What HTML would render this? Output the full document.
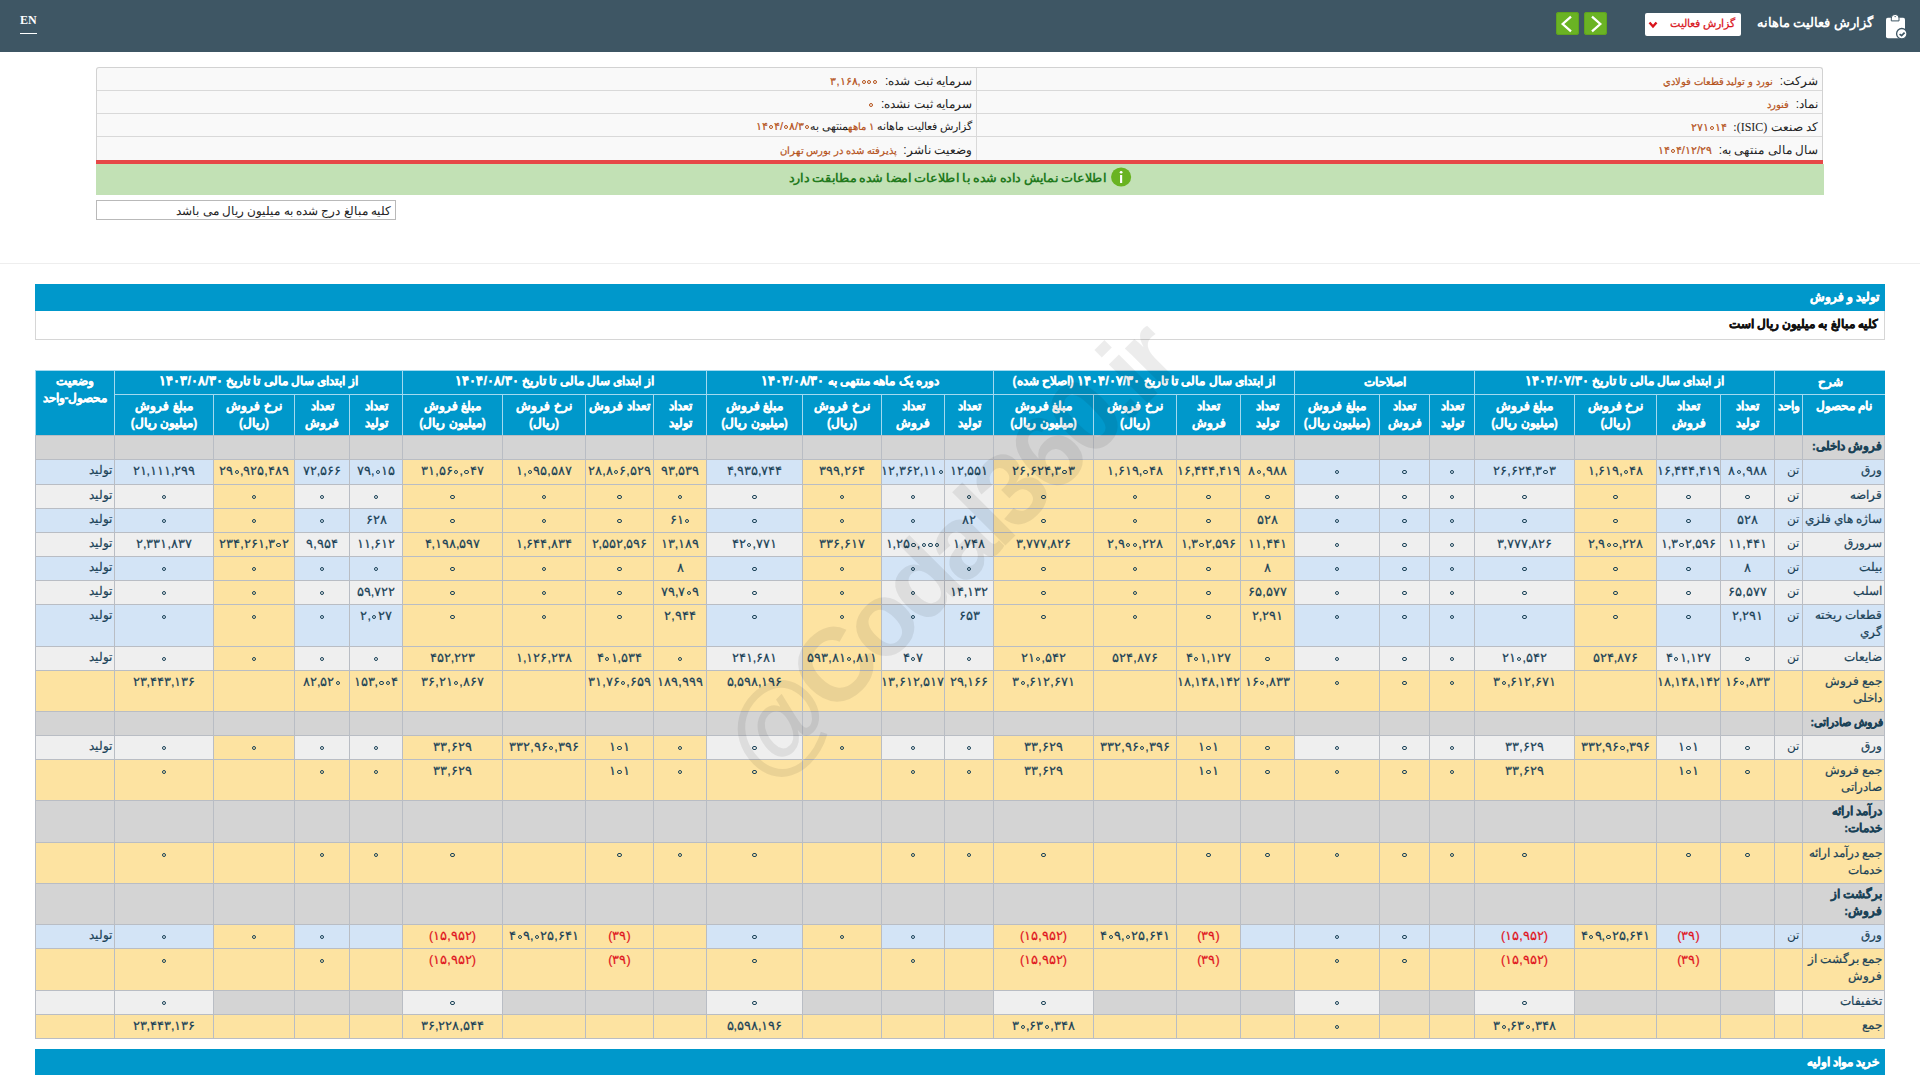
<!DOCTYPE html>
<html lang="fa" dir="rtl">
<head>
<meta charset="utf-8">
<title>Codal</title>
<style>
html,body{margin:0;padding:0;}
body{width:1920px;height:1080px;overflow:hidden;position:relative;background:#fff;font-family:"Liberation Sans",sans-serif;color:#222;}
.abs{position:absolute;}
#top{position:absolute;left:0;top:0;width:1920px;height:52px;background:#3e5664;}
#en{position:absolute;left:20px;top:13px;font-family:"Liberation Serif",serif;font-size:12px;font-weight:bold;color:#fff;border-bottom:1.3px solid #fff;line-height:15px;padding-bottom:5px;}
#ttl{position:absolute;right:47px;top:15px;color:#fff;font-size:13px;font-weight:bold;white-space:nowrap;}
#sel{position:absolute;left:1645px;top:13px;width:96px;height:23px;background:#fff;border-radius:2px;}
#sel span{position:absolute;right:6px;top:4px;color:#d9141b;font-size:11px;-webkit-text-stroke:0.25px #d9141b;white-space:nowrap;}
.gbtn{position:absolute;top:12px;width:23px;height:23px;background:#6ab324;border-radius:3px;box-shadow:inset 0 0 0 1px #5fa31f;}
#info{position:absolute;left:96px;top:67px;width:1727px;height:93px;box-sizing:border-box;border:1px solid #d2d2d2;border-bottom:none;border-radius:3px 3px 0 0;background:#f9f9f9;}
.irow{position:absolute;left:0;width:1725px;height:23px;border-top:1px solid #d9d9d9;}
.lab{position:absolute;font-size:12px;color:#222;white-space:nowrap;top:4px;}
.val{color:#b5521a;font-size:10px;-webkit-text-stroke:0.2px currentColor;}
.val.vn{font-size:11px;}
.vb{font-weight:normal;unicode-bidi:isolate;direction:ltr;}
i.z{display:inline-block;width:.537em;height:0;position:relative;}
i.z::after{content:"";position:absolute;left:50%;margin-left:-2px;bottom:1px;width:4px;height:4px;box-sizing:border-box;border:1.4px solid currentColor;border-radius:50%;}
#red{position:absolute;left:96px;top:160px;width:1727px;height:4px;background:#e64747;}
#green{position:absolute;left:96px;top:164px;width:1728px;height:31px;background:#c2e1b5;}
#note{position:absolute;left:96px;top:200px;width:300px;height:20px;box-sizing:border-box;border:1px solid #b9b9b9;font-size:12px;}
#hr{position:absolute;left:0;top:263px;width:1920px;height:1px;background:#eee;}
.bar{position:absolute;left:35px;width:1850px;height:27px;background:#0098cb;color:#fff;font-weight:bold;font-size:11.5px;-webkit-text-stroke:0.5px #fff;}
.bar span{position:absolute;right:6px;top:6px;white-space:nowrap;}
#sub{position:absolute;left:35px;top:311px;width:1850px;height:29px;box-sizing:border-box;border:1px solid #d6d6d6;border-top:none;font-weight:bold;font-size:12px;color:#111;}
#sub span{position:absolute;right:6px;top:6px;white-space:nowrap;font-size:11.8px;-webkit-text-stroke:0.45px #111;}
.h{position:absolute;box-sizing:border-box;background:#0098cb;color:#fff;font-weight:bold;font-size:12px;-webkit-text-stroke:0.3px #fff;line-height:17px;text-align:center;border-left:1px solid #a3d9ef;border-top:1px solid #a3d9ef;padding-top:3px;white-space:nowrap;overflow:hidden;}
.h .hd{font-size:13px;}
.c{position:absolute;box-sizing:border-box;border-left:1px solid #b9bdc4;border-top:1px solid #b9bdc4;font-size:11px;line-height:17.6px;text-align:center;color:#1a4257;padding-top:2px;white-space:nowrap;overflow:hidden;}
.c.nm{text-align:right;padding-right:2px;font-size:11.5px;line-height:17px;border-right:1px solid #b9bdc4;-webkit-text-stroke:0.2px currentColor;}
.c.st{text-align:right;padding-right:2px;font-size:11.5px;-webkit-text-stroke:0.2px currentColor;}
.c.b{font-weight:bold;font-size:11.5px;-webkit-text-stroke:0.35px currentColor;}
.c.u{text-align:right;padding-right:3px;font-size:12px;}
.c.n{font-size:12.5px;padding-top:3px;-webkit-text-stroke:0.2px currentColor;}
.c b{font-weight:normal;unicode-bidi:isolate;direction:ltr;}
.c i{display:inline-block;width:.537em;height:0;position:relative;}
.c i::after{content:"";position:absolute;left:50%;margin-left:-2px;bottom:0.8px;width:4.2px;height:4.2px;box-sizing:border-box;border:1.6px solid currentColor;border-radius:50%;}
.c.red{color:#e0141e;}
#wm{position:absolute;left:949px;top:551px;font-size:104px;letter-spacing:-6px;line-height:1;font-weight:bold;color:rgba(0,0,0,0.075);transform:translate(-50%,-50%) rotate(-45deg);white-space:nowrap;font-family:"Liberation Sans",sans-serif;direction:ltr;}
</style>
</head>
<body>
<div id="top">
  <div id="en">EN</div>
  <svg class="abs" style="left:1884px;top:14px" width="26" height="27" viewBox="0 0 26 27">
    <rect x="2" y="3.8" width="19" height="20.5" rx="1.8" fill="#fff"/>
    <path d="M7.3 6.9 V4 A3.85 3.6 0 0 1 15 4 V6.9 Z" fill="#fff" stroke="#3e5664" stroke-width="1"/>
    <circle cx="11.15" cy="2.6" r="0.7" fill="#3e5664"/>
    <circle cx="17.8" cy="19.7" r="5.2" fill="#fff" stroke="#3e5664" stroke-width="1.3"/>
    <path d="M15.6 20.1 L17.6 21.6 L20.6 18.6" stroke="#3e5664" stroke-width="1.7" fill="none"/>
  </svg>
  <div id="ttl">گزارش فعالیت ماهانه</div>
  <div id="sel"><span>گزارش فعالیت</span>
    <svg class="abs" style="left:3px;top:8px" width="10" height="8" viewBox="0 0 10 8"><path d="M1.5 1.5 L5 5.5 L8.5 1.5" stroke="#d9141b" stroke-width="2.4" fill="none"/></svg>
  </div>
  <div class="gbtn" style="left:1584px"><svg width="23" height="23" viewBox="0 0 23 23"><path d="M8 4.6 L16.3 12 L8 19.4" stroke="#fff" stroke-width="2.3" fill="none"/></svg></div>
  <div class="gbtn" style="left:1556px"><svg width="23" height="23" viewBox="0 0 23 23"><path d="M15 4.6 L6.7 12 L15 19.4" stroke="#fff" stroke-width="2.3" fill="none"/></svg></div>
</div>

<div id="info">
  <div class="irow" style="top:-1px;border-top:none"></div>
  <div class="irow" style="top:22px"></div>
  <div class="irow" style="top:45px"></div>
  <div class="irow" style="top:68px"></div>
  <div class="abs" style="left:879px;top:0;width:1px;height:92px;background:#d9d9d9"></div>
  <div class="lab" style="right:4px;top:6px">شرکت:&nbsp; <span class="val">نورد و تولید قطعات فولادي</span></div>
  <div class="lab" style="right:4px;top:29px">نماد:&nbsp; <span class="val">فنورد</span></div>
  <div class="lab" style="right:4px;top:52px">کد صنعت <span style="font-family:'Liberation Serif',serif;font-size:12px">(ISIC):</span>&nbsp; <span class="val vn"><b class="vb" dir="ltr">۲۷۱<i class="z"></i>۱۴</b></span></div>
  <div class="lab" style="right:4px;top:75px">سال مالی منتهی به:&nbsp; <span class="val vn"><b class="vb" dir="ltr">۱۴<i class="z"></i>۴/۱۲/۲۹</b></span></div>
  <div class="lab" style="right:850px;top:6px">سرمایه ثبت شده:&nbsp; <span class="val vn"><b class="vb" dir="ltr">۳,۱۶۸,<i class="z"></i><i class="z"></i><i class="z"></i></b></span></div>
  <div class="lab" style="right:850px;top:29px">سرمایه ثبت نشده:&nbsp; <span class="val vn"><b class="vb" dir="ltr"><i class="z"></i></b></span></div>
  <div class="lab" style="right:850px;top:52px;font-size:11px">گزارش فعالیت ماهانه <span class="val">۱ ماهه</span>منتهی به<span class="val vn"><b class="vb" dir="ltr">۱۴<i class="z"></i>۴/<i class="z"></i>۸/۳<i class="z"></i></b></span></div>
  <div class="lab" style="right:850px;top:75px">وضعیت ناشر:&nbsp; <span class="val">پذیرفته شده در بورس تهران</span></div>
</div>
<div id="red"></div>
<div id="green">
  <div class="abs" style="left:0;right:0;top:3px;text-align:center;color:#237a1d;font-weight:bold;font-size:12px;transform:scaleX(1.06);white-space:nowrap">
    <svg style="vertical-align:-5px;margin-left:4px" width="20" height="20" viewBox="0 0 20 20"><circle cx="10" cy="10" r="9.5" fill="#69b321"/><rect x="9" y="8" width="2" height="8" fill="#fff"/><circle cx="10" cy="5.2" r="1.3" fill="#fff"/></svg>اطلاعات نمایش داده شده با اطلاعات امضا شده مطابقت دارد
  </div>
</div>
<div id="note"><span class="abs" style="right:4px;top:3px;white-space:nowrap">کلیه مبالغ درج شده به میلیون ریال می باشد</span></div>
<div id="hr"></div>

<div class="bar" style="top:284px"><span>تولید و فروش</span></div>
<div id="sub"><span>کلیه مبالغ به میلیون ریال است</span></div>

<div class="h" style="left:1774px;top:370px;width:111px;height:24px">شرح</div>
<div class="h" style="left:1474px;top:370px;width:300px;height:24px;padding-top:1px">از ابتدای سال مالی تا تاریخ <span class="hd">۱۴۰۴/۰۷/۳۰</span></div>
<div class="h" style="left:1294px;top:370px;width:180px;height:24px">اصلاحات</div>
<div class="h" style="left:993px;top:370px;width:301px;height:24px;padding-top:1px">از ابتدای سال مالی تا تاریخ <span class="hd">۱۴۰۴/۰۷/۳۰</span> (اصلاح شده)</div>
<div class="h" style="left:706px;top:370px;width:287px;height:24px;padding-top:1px">دوره یک ماهه منتهی به <span class="hd">۱۴۰۴/۰۸/۳۰</span></div>
<div class="h" style="left:402px;top:370px;width:304px;height:24px;padding-top:1px">از ابتدای سال مالی تا تاریخ <span class="hd">۱۴۰۴/۰۸/۳۰</span></div>
<div class="h" style="left:114px;top:370px;width:288px;height:24px;padding-top:1px">از ابتدای سال مالی تا تاریخ <span class="hd">۱۴۰۳/۰۸/۳۰</span></div>
<div class="h" style="left:35px;top:370px;width:79px;height:65px;padding-top:2px">وضعیت<br>محصول-واحد</div>
<div class="h s" style="left:1802px;top:394px;width:83px;height:41px">نام محصول</div>
<div class="h s" style="left:1774px;top:394px;width:28px;height:41px">واحد</div>
<div class="h s" style="left:1720px;top:394px;width:54px;height:41px">تعداد<br>تولید</div>
<div class="h s" style="left:1656px;top:394px;width:64px;height:41px">تعداد<br>فروش</div>
<div class="h s" style="left:1574px;top:394px;width:82px;height:41px">نرخ فروش<br>(ریال)</div>
<div class="h s" style="left:1474px;top:394px;width:100px;height:41px">مبلغ فروش<br>(میلیون ریال)</div>
<div class="h s" style="left:1429px;top:394px;width:45px;height:41px">تعداد<br>تولید</div>
<div class="h s" style="left:1379px;top:394px;width:50px;height:41px">تعداد<br>فروش</div>
<div class="h s" style="left:1294px;top:394px;width:85px;height:41px">مبلغ فروش<br>(میلیون ریال)</div>
<div class="h s" style="left:1240px;top:394px;width:54px;height:41px">تعداد<br>تولید</div>
<div class="h s" style="left:1176px;top:394px;width:64px;height:41px">تعداد<br>فروش</div>
<div class="h s" style="left:1093px;top:394px;width:83px;height:41px">نرخ فروش<br>(ریال)</div>
<div class="h s" style="left:993px;top:394px;width:100px;height:41px">مبلغ فروش<br>(میلیون ریال)</div>
<div class="h s" style="left:944px;top:394px;width:49px;height:41px">تعداد<br>تولید</div>
<div class="h s" style="left:881px;top:394px;width:63px;height:41px">تعداد<br>فروش</div>
<div class="h s" style="left:802px;top:394px;width:79px;height:41px">نرخ فروش<br>(ریال)</div>
<div class="h s" style="left:706px;top:394px;width:96px;height:41px">مبلغ فروش<br>(میلیون ریال)</div>
<div class="h s" style="left:653px;top:394px;width:53px;height:41px">تعداد<br>تولید</div>
<div class="h s" style="left:585px;top:394px;width:68px;height:41px">تعداد فروش</div>
<div class="h s" style="left:502px;top:394px;width:83px;height:41px">نرخ فروش<br>(ریال)</div>
<div class="h s" style="left:402px;top:394px;width:100px;height:41px">مبلغ فروش<br>(میلیون ریال)</div>
<div class="h s" style="left:349px;top:394px;width:53px;height:41px">تعداد<br>تولید</div>
<div class="h s" style="left:294px;top:394px;width:55px;height:41px">تعداد<br>فروش</div>
<div class="h s" style="left:213px;top:394px;width:81px;height:41px">نرخ فروش<br>(ریال)</div>
<div class="h s" style="left:114px;top:394px;width:99px;height:41px">مبلغ فروش<br>(میلیون ریال)</div>
<div class="c nm b" style="left:1802px;top:435px;width:83px;height:24px;background:#d4d4d4">فروش داخلی:</div>
<div class="c u" style="left:1774px;top:435px;width:28px;height:24px;background:#d4d4d4"></div>
<div class="c" style="left:1720px;top:435px;width:54px;height:24px;background:#d4d4d4"></div>
<div class="c" style="left:1656px;top:435px;width:64px;height:24px;background:#d4d4d4"></div>
<div class="c" style="left:1574px;top:435px;width:82px;height:24px;background:#d4d4d4"></div>
<div class="c" style="left:1474px;top:435px;width:100px;height:24px;background:#d4d4d4"></div>
<div class="c" style="left:1429px;top:435px;width:45px;height:24px;background:#d4d4d4"></div>
<div class="c" style="left:1379px;top:435px;width:50px;height:24px;background:#d4d4d4"></div>
<div class="c" style="left:1294px;top:435px;width:85px;height:24px;background:#d4d4d4"></div>
<div class="c" style="left:1240px;top:435px;width:54px;height:24px;background:#d4d4d4"></div>
<div class="c" style="left:1176px;top:435px;width:64px;height:24px;background:#d4d4d4"></div>
<div class="c" style="left:1093px;top:435px;width:83px;height:24px;background:#d4d4d4"></div>
<div class="c" style="left:993px;top:435px;width:100px;height:24px;background:#d4d4d4"></div>
<div class="c" style="left:944px;top:435px;width:49px;height:24px;background:#d4d4d4"></div>
<div class="c" style="left:881px;top:435px;width:63px;height:24px;background:#d4d4d4"></div>
<div class="c" style="left:802px;top:435px;width:79px;height:24px;background:#d4d4d4"></div>
<div class="c" style="left:706px;top:435px;width:96px;height:24px;background:#d4d4d4"></div>
<div class="c" style="left:653px;top:435px;width:53px;height:24px;background:#d4d4d4"></div>
<div class="c" style="left:585px;top:435px;width:68px;height:24px;background:#d4d4d4"></div>
<div class="c" style="left:502px;top:435px;width:83px;height:24px;background:#d4d4d4"></div>
<div class="c" style="left:402px;top:435px;width:100px;height:24px;background:#d4d4d4"></div>
<div class="c" style="left:349px;top:435px;width:53px;height:24px;background:#d4d4d4"></div>
<div class="c" style="left:294px;top:435px;width:55px;height:24px;background:#d4d4d4"></div>
<div class="c" style="left:213px;top:435px;width:81px;height:24px;background:#d4d4d4"></div>
<div class="c" style="left:114px;top:435px;width:99px;height:24px;background:#d4d4d4"></div>
<div class="c st" style="left:35px;top:435px;width:79px;height:24px;background:#d4d4d4"></div>
<div class="c nm" style="left:1802px;top:459px;width:83px;height:25px;background:#d3e4f6">ورق</div>
<div class="c u" style="left:1774px;top:459px;width:28px;height:25px;background:#d3e4f6">تن</div>
<div class="c n" style="left:1720px;top:459px;width:54px;height:25px;background:#d3e4f6"><b dir="ltr">۸<i></i>,۹۸۸</b></div>
<div class="c n" style="left:1656px;top:459px;width:64px;height:25px;background:#d3e4f6"><b dir="ltr">۱۶,۴۴۴,۴۱۹</b></div>
<div class="c n" style="left:1574px;top:459px;width:82px;height:25px;background:#fde3a1"><b dir="ltr">۱,۶۱۹,<i></i>۴۸</b></div>
<div class="c n" style="left:1474px;top:459px;width:100px;height:25px;background:#d3e4f6"><b dir="ltr">۲۶,۶۲۴,۳<i></i>۳</b></div>
<div class="c n" style="left:1429px;top:459px;width:45px;height:25px;background:#d3e4f6"><b dir="ltr"><i></i></b></div>
<div class="c n" style="left:1379px;top:459px;width:50px;height:25px;background:#d3e4f6"><b dir="ltr"><i></i></b></div>
<div class="c n" style="left:1294px;top:459px;width:85px;height:25px;background:#d3e4f6"><b dir="ltr"><i></i></b></div>
<div class="c n" style="left:1240px;top:459px;width:54px;height:25px;background:#fde3a1"><b dir="ltr">۸<i></i>,۹۸۸</b></div>
<div class="c n" style="left:1176px;top:459px;width:64px;height:25px;background:#fde3a1"><b dir="ltr">۱۶,۴۴۴,۴۱۹</b></div>
<div class="c n" style="left:1093px;top:459px;width:83px;height:25px;background:#fde3a1"><b dir="ltr">۱,۶۱۹,<i></i>۴۸</b></div>
<div class="c n" style="left:993px;top:459px;width:100px;height:25px;background:#fde3a1"><b dir="ltr">۲۶,۶۲۴,۳<i></i>۳</b></div>
<div class="c n" style="left:944px;top:459px;width:49px;height:25px;background:#d3e4f6"><b dir="ltr">۱۲,۵۵۱</b></div>
<div class="c n" style="left:881px;top:459px;width:63px;height:25px;background:#d3e4f6"><b dir="ltr">۱۲,۳۶۲,۱۱<i></i></b></div>
<div class="c n" style="left:802px;top:459px;width:79px;height:25px;background:#fde3a1"><b dir="ltr">۳۹۹,۲۶۴</b></div>
<div class="c n" style="left:706px;top:459px;width:96px;height:25px;background:#d3e4f6"><b dir="ltr">۴,۹۳۵,۷۴۴</b></div>
<div class="c n" style="left:653px;top:459px;width:53px;height:25px;background:#fde3a1"><b dir="ltr">۹۳,۵۳۹</b></div>
<div class="c n" style="left:585px;top:459px;width:68px;height:25px;background:#fde3a1"><b dir="ltr">۲۸,۸<i></i>۶,۵۲۹</b></div>
<div class="c n" style="left:502px;top:459px;width:83px;height:25px;background:#fde3a1"><b dir="ltr">۱,<i></i>۹۵,۵۸۷</b></div>
<div class="c n" style="left:402px;top:459px;width:100px;height:25px;background:#fde3a1"><b dir="ltr">۳۱,۵۶<i></i>,<i></i>۴۷</b></div>
<div class="c n" style="left:349px;top:459px;width:53px;height:25px;background:#d3e4f6"><b dir="ltr">۷۹,<i></i>۱۵</b></div>
<div class="c n" style="left:294px;top:459px;width:55px;height:25px;background:#d3e4f6"><b dir="ltr">۷۲,۵۶۶</b></div>
<div class="c n" style="left:213px;top:459px;width:81px;height:25px;background:#fde3a1"><b dir="ltr">۲۹<i></i>,۹۲۵,۴۸۹</b></div>
<div class="c n" style="left:114px;top:459px;width:99px;height:25px;background:#d3e4f6"><b dir="ltr">۲۱,۱۱۱,۲۹۹</b></div>
<div class="c st" style="left:35px;top:459px;width:79px;height:25px;background:#d3e4f6">تولید</div>
<div class="c nm" style="left:1802px;top:484px;width:83px;height:24px;background:#efefef">قراضه</div>
<div class="c u" style="left:1774px;top:484px;width:28px;height:24px;background:#efefef">تن</div>
<div class="c n" style="left:1720px;top:484px;width:54px;height:24px;background:#efefef"><b dir="ltr"><i></i></b></div>
<div class="c n" style="left:1656px;top:484px;width:64px;height:24px;background:#efefef"><b dir="ltr"><i></i></b></div>
<div class="c n" style="left:1574px;top:484px;width:82px;height:24px;background:#fde3a1"><b dir="ltr"><i></i></b></div>
<div class="c n" style="left:1474px;top:484px;width:100px;height:24px;background:#efefef"><b dir="ltr"><i></i></b></div>
<div class="c n" style="left:1429px;top:484px;width:45px;height:24px;background:#efefef"><b dir="ltr"><i></i></b></div>
<div class="c n" style="left:1379px;top:484px;width:50px;height:24px;background:#efefef"><b dir="ltr"><i></i></b></div>
<div class="c n" style="left:1294px;top:484px;width:85px;height:24px;background:#efefef"><b dir="ltr"><i></i></b></div>
<div class="c n" style="left:1240px;top:484px;width:54px;height:24px;background:#fde3a1"><b dir="ltr"><i></i></b></div>
<div class="c n" style="left:1176px;top:484px;width:64px;height:24px;background:#fde3a1"><b dir="ltr"><i></i></b></div>
<div class="c n" style="left:1093px;top:484px;width:83px;height:24px;background:#fde3a1"><b dir="ltr"><i></i></b></div>
<div class="c n" style="left:993px;top:484px;width:100px;height:24px;background:#fde3a1"><b dir="ltr"><i></i></b></div>
<div class="c n" style="left:944px;top:484px;width:49px;height:24px;background:#efefef"><b dir="ltr"><i></i></b></div>
<div class="c n" style="left:881px;top:484px;width:63px;height:24px;background:#efefef"><b dir="ltr"><i></i></b></div>
<div class="c n" style="left:802px;top:484px;width:79px;height:24px;background:#fde3a1"><b dir="ltr"><i></i></b></div>
<div class="c n" style="left:706px;top:484px;width:96px;height:24px;background:#efefef"><b dir="ltr"><i></i></b></div>
<div class="c n" style="left:653px;top:484px;width:53px;height:24px;background:#fde3a1"><b dir="ltr"><i></i></b></div>
<div class="c n" style="left:585px;top:484px;width:68px;height:24px;background:#fde3a1"><b dir="ltr"><i></i></b></div>
<div class="c n" style="left:502px;top:484px;width:83px;height:24px;background:#fde3a1"><b dir="ltr"><i></i></b></div>
<div class="c n" style="left:402px;top:484px;width:100px;height:24px;background:#fde3a1"><b dir="ltr"><i></i></b></div>
<div class="c n" style="left:349px;top:484px;width:53px;height:24px;background:#efefef"><b dir="ltr"><i></i></b></div>
<div class="c n" style="left:294px;top:484px;width:55px;height:24px;background:#efefef"><b dir="ltr"><i></i></b></div>
<div class="c n" style="left:213px;top:484px;width:81px;height:24px;background:#fde3a1"><b dir="ltr"><i></i></b></div>
<div class="c n" style="left:114px;top:484px;width:99px;height:24px;background:#efefef"><b dir="ltr"><i></i></b></div>
<div class="c st" style="left:35px;top:484px;width:79px;height:24px;background:#efefef">تولید</div>
<div class="c nm" style="left:1802px;top:508px;width:83px;height:24px;background:#d3e4f6">ساژه هاي فلزي</div>
<div class="c u" style="left:1774px;top:508px;width:28px;height:24px;background:#d3e4f6">تن</div>
<div class="c n" style="left:1720px;top:508px;width:54px;height:24px;background:#d3e4f6"><b dir="ltr">۵۲۸</b></div>
<div class="c n" style="left:1656px;top:508px;width:64px;height:24px;background:#d3e4f6"><b dir="ltr"><i></i></b></div>
<div class="c n" style="left:1574px;top:508px;width:82px;height:24px;background:#fde3a1"><b dir="ltr"><i></i></b></div>
<div class="c n" style="left:1474px;top:508px;width:100px;height:24px;background:#d3e4f6"><b dir="ltr"><i></i></b></div>
<div class="c n" style="left:1429px;top:508px;width:45px;height:24px;background:#d3e4f6"><b dir="ltr"><i></i></b></div>
<div class="c n" style="left:1379px;top:508px;width:50px;height:24px;background:#d3e4f6"><b dir="ltr"><i></i></b></div>
<div class="c n" style="left:1294px;top:508px;width:85px;height:24px;background:#d3e4f6"><b dir="ltr"><i></i></b></div>
<div class="c n" style="left:1240px;top:508px;width:54px;height:24px;background:#fde3a1"><b dir="ltr">۵۲۸</b></div>
<div class="c n" style="left:1176px;top:508px;width:64px;height:24px;background:#fde3a1"><b dir="ltr"><i></i></b></div>
<div class="c n" style="left:1093px;top:508px;width:83px;height:24px;background:#fde3a1"><b dir="ltr"><i></i></b></div>
<div class="c n" style="left:993px;top:508px;width:100px;height:24px;background:#fde3a1"><b dir="ltr"><i></i></b></div>
<div class="c n" style="left:944px;top:508px;width:49px;height:24px;background:#d3e4f6"><b dir="ltr">۸۲</b></div>
<div class="c n" style="left:881px;top:508px;width:63px;height:24px;background:#d3e4f6"><b dir="ltr"><i></i></b></div>
<div class="c n" style="left:802px;top:508px;width:79px;height:24px;background:#fde3a1"><b dir="ltr"><i></i></b></div>
<div class="c n" style="left:706px;top:508px;width:96px;height:24px;background:#d3e4f6"><b dir="ltr"><i></i></b></div>
<div class="c n" style="left:653px;top:508px;width:53px;height:24px;background:#fde3a1"><b dir="ltr">۶۱<i></i></b></div>
<div class="c n" style="left:585px;top:508px;width:68px;height:24px;background:#fde3a1"><b dir="ltr"><i></i></b></div>
<div class="c n" style="left:502px;top:508px;width:83px;height:24px;background:#fde3a1"><b dir="ltr"><i></i></b></div>
<div class="c n" style="left:402px;top:508px;width:100px;height:24px;background:#fde3a1"><b dir="ltr"><i></i></b></div>
<div class="c n" style="left:349px;top:508px;width:53px;height:24px;background:#d3e4f6"><b dir="ltr">۶۲۸</b></div>
<div class="c n" style="left:294px;top:508px;width:55px;height:24px;background:#d3e4f6"><b dir="ltr"><i></i></b></div>
<div class="c n" style="left:213px;top:508px;width:81px;height:24px;background:#fde3a1"><b dir="ltr"><i></i></b></div>
<div class="c n" style="left:114px;top:508px;width:99px;height:24px;background:#d3e4f6"><b dir="ltr"><i></i></b></div>
<div class="c st" style="left:35px;top:508px;width:79px;height:24px;background:#d3e4f6">تولید</div>
<div class="c nm" style="left:1802px;top:532px;width:83px;height:24px;background:#efefef">سرورق</div>
<div class="c u" style="left:1774px;top:532px;width:28px;height:24px;background:#efefef">تن</div>
<div class="c n" style="left:1720px;top:532px;width:54px;height:24px;background:#efefef"><b dir="ltr">۱۱,۴۴۱</b></div>
<div class="c n" style="left:1656px;top:532px;width:64px;height:24px;background:#efefef"><b dir="ltr">۱,۳<i></i>۲,۵۹۶</b></div>
<div class="c n" style="left:1574px;top:532px;width:82px;height:24px;background:#fde3a1"><b dir="ltr">۲,۹<i></i><i></i>,۲۲۸</b></div>
<div class="c n" style="left:1474px;top:532px;width:100px;height:24px;background:#efefef"><b dir="ltr">۳,۷۷۷,۸۲۶</b></div>
<div class="c n" style="left:1429px;top:532px;width:45px;height:24px;background:#efefef"><b dir="ltr"><i></i></b></div>
<div class="c n" style="left:1379px;top:532px;width:50px;height:24px;background:#efefef"><b dir="ltr"><i></i></b></div>
<div class="c n" style="left:1294px;top:532px;width:85px;height:24px;background:#efefef"><b dir="ltr"><i></i></b></div>
<div class="c n" style="left:1240px;top:532px;width:54px;height:24px;background:#fde3a1"><b dir="ltr">۱۱,۴۴۱</b></div>
<div class="c n" style="left:1176px;top:532px;width:64px;height:24px;background:#fde3a1"><b dir="ltr">۱,۳<i></i>۲,۵۹۶</b></div>
<div class="c n" style="left:1093px;top:532px;width:83px;height:24px;background:#fde3a1"><b dir="ltr">۲,۹<i></i><i></i>,۲۲۸</b></div>
<div class="c n" style="left:993px;top:532px;width:100px;height:24px;background:#fde3a1"><b dir="ltr">۳,۷۷۷,۸۲۶</b></div>
<div class="c n" style="left:944px;top:532px;width:49px;height:24px;background:#efefef"><b dir="ltr">۱,۷۴۸</b></div>
<div class="c n" style="left:881px;top:532px;width:63px;height:24px;background:#efefef"><b dir="ltr">۱,۲۵<i></i>,<i></i><i></i><i></i></b></div>
<div class="c n" style="left:802px;top:532px;width:79px;height:24px;background:#fde3a1"><b dir="ltr">۳۳۶,۶۱۷</b></div>
<div class="c n" style="left:706px;top:532px;width:96px;height:24px;background:#efefef"><b dir="ltr">۴۲<i></i>,۷۷۱</b></div>
<div class="c n" style="left:653px;top:532px;width:53px;height:24px;background:#fde3a1"><b dir="ltr">۱۳,۱۸۹</b></div>
<div class="c n" style="left:585px;top:532px;width:68px;height:24px;background:#fde3a1"><b dir="ltr">۲,۵۵۲,۵۹۶</b></div>
<div class="c n" style="left:502px;top:532px;width:83px;height:24px;background:#fde3a1"><b dir="ltr">۱,۶۴۴,۸۳۴</b></div>
<div class="c n" style="left:402px;top:532px;width:100px;height:24px;background:#fde3a1"><b dir="ltr">۴,۱۹۸,۵۹۷</b></div>
<div class="c n" style="left:349px;top:532px;width:53px;height:24px;background:#efefef"><b dir="ltr">۱۱,۶۱۲</b></div>
<div class="c n" style="left:294px;top:532px;width:55px;height:24px;background:#efefef"><b dir="ltr">۹,۹۵۴</b></div>
<div class="c n" style="left:213px;top:532px;width:81px;height:24px;background:#fde3a1"><b dir="ltr">۲۳۴,۲۶۱,۳<i></i>۲</b></div>
<div class="c n" style="left:114px;top:532px;width:99px;height:24px;background:#efefef"><b dir="ltr">۲,۳۳۱,۸۳۷</b></div>
<div class="c st" style="left:35px;top:532px;width:79px;height:24px;background:#efefef">تولید</div>
<div class="c nm" style="left:1802px;top:556px;width:83px;height:24px;background:#d3e4f6">بیلت</div>
<div class="c u" style="left:1774px;top:556px;width:28px;height:24px;background:#d3e4f6">تن</div>
<div class="c n" style="left:1720px;top:556px;width:54px;height:24px;background:#d3e4f6"><b dir="ltr">۸</b></div>
<div class="c n" style="left:1656px;top:556px;width:64px;height:24px;background:#d3e4f6"><b dir="ltr"><i></i></b></div>
<div class="c n" style="left:1574px;top:556px;width:82px;height:24px;background:#fde3a1"><b dir="ltr"><i></i></b></div>
<div class="c n" style="left:1474px;top:556px;width:100px;height:24px;background:#d3e4f6"><b dir="ltr"><i></i></b></div>
<div class="c n" style="left:1429px;top:556px;width:45px;height:24px;background:#d3e4f6"><b dir="ltr"><i></i></b></div>
<div class="c n" style="left:1379px;top:556px;width:50px;height:24px;background:#d3e4f6"><b dir="ltr"><i></i></b></div>
<div class="c n" style="left:1294px;top:556px;width:85px;height:24px;background:#d3e4f6"><b dir="ltr"><i></i></b></div>
<div class="c n" style="left:1240px;top:556px;width:54px;height:24px;background:#fde3a1"><b dir="ltr">۸</b></div>
<div class="c n" style="left:1176px;top:556px;width:64px;height:24px;background:#fde3a1"><b dir="ltr"><i></i></b></div>
<div class="c n" style="left:1093px;top:556px;width:83px;height:24px;background:#fde3a1"><b dir="ltr"><i></i></b></div>
<div class="c n" style="left:993px;top:556px;width:100px;height:24px;background:#fde3a1"><b dir="ltr"><i></i></b></div>
<div class="c n" style="left:944px;top:556px;width:49px;height:24px;background:#d3e4f6"><b dir="ltr"><i></i></b></div>
<div class="c n" style="left:881px;top:556px;width:63px;height:24px;background:#d3e4f6"><b dir="ltr"><i></i></b></div>
<div class="c n" style="left:802px;top:556px;width:79px;height:24px;background:#fde3a1"><b dir="ltr"><i></i></b></div>
<div class="c n" style="left:706px;top:556px;width:96px;height:24px;background:#d3e4f6"><b dir="ltr"><i></i></b></div>
<div class="c n" style="left:653px;top:556px;width:53px;height:24px;background:#fde3a1"><b dir="ltr">۸</b></div>
<div class="c n" style="left:585px;top:556px;width:68px;height:24px;background:#fde3a1"><b dir="ltr"><i></i></b></div>
<div class="c n" style="left:502px;top:556px;width:83px;height:24px;background:#fde3a1"><b dir="ltr"><i></i></b></div>
<div class="c n" style="left:402px;top:556px;width:100px;height:24px;background:#fde3a1"><b dir="ltr"><i></i></b></div>
<div class="c n" style="left:349px;top:556px;width:53px;height:24px;background:#d3e4f6"><b dir="ltr"><i></i></b></div>
<div class="c n" style="left:294px;top:556px;width:55px;height:24px;background:#d3e4f6"><b dir="ltr"><i></i></b></div>
<div class="c n" style="left:213px;top:556px;width:81px;height:24px;background:#fde3a1"><b dir="ltr"><i></i></b></div>
<div class="c n" style="left:114px;top:556px;width:99px;height:24px;background:#d3e4f6"><b dir="ltr"><i></i></b></div>
<div class="c st" style="left:35px;top:556px;width:79px;height:24px;background:#d3e4f6">تولید</div>
<div class="c nm" style="left:1802px;top:580px;width:83px;height:24px;background:#efefef">اسلب</div>
<div class="c u" style="left:1774px;top:580px;width:28px;height:24px;background:#efefef">تن</div>
<div class="c n" style="left:1720px;top:580px;width:54px;height:24px;background:#efefef"><b dir="ltr">۶۵,۵۷۷</b></div>
<div class="c n" style="left:1656px;top:580px;width:64px;height:24px;background:#efefef"><b dir="ltr"><i></i></b></div>
<div class="c n" style="left:1574px;top:580px;width:82px;height:24px;background:#fde3a1"><b dir="ltr"><i></i></b></div>
<div class="c n" style="left:1474px;top:580px;width:100px;height:24px;background:#efefef"><b dir="ltr"><i></i></b></div>
<div class="c n" style="left:1429px;top:580px;width:45px;height:24px;background:#efefef"><b dir="ltr"><i></i></b></div>
<div class="c n" style="left:1379px;top:580px;width:50px;height:24px;background:#efefef"><b dir="ltr"><i></i></b></div>
<div class="c n" style="left:1294px;top:580px;width:85px;height:24px;background:#efefef"><b dir="ltr"><i></i></b></div>
<div class="c n" style="left:1240px;top:580px;width:54px;height:24px;background:#fde3a1"><b dir="ltr">۶۵,۵۷۷</b></div>
<div class="c n" style="left:1176px;top:580px;width:64px;height:24px;background:#fde3a1"><b dir="ltr"><i></i></b></div>
<div class="c n" style="left:1093px;top:580px;width:83px;height:24px;background:#fde3a1"><b dir="ltr"><i></i></b></div>
<div class="c n" style="left:993px;top:580px;width:100px;height:24px;background:#fde3a1"><b dir="ltr"><i></i></b></div>
<div class="c n" style="left:944px;top:580px;width:49px;height:24px;background:#efefef"><b dir="ltr">۱۴,۱۳۲</b></div>
<div class="c n" style="left:881px;top:580px;width:63px;height:24px;background:#efefef"><b dir="ltr"><i></i></b></div>
<div class="c n" style="left:802px;top:580px;width:79px;height:24px;background:#fde3a1"><b dir="ltr"><i></i></b></div>
<div class="c n" style="left:706px;top:580px;width:96px;height:24px;background:#efefef"><b dir="ltr"><i></i></b></div>
<div class="c n" style="left:653px;top:580px;width:53px;height:24px;background:#fde3a1"><b dir="ltr">۷۹,۷<i></i>۹</b></div>
<div class="c n" style="left:585px;top:580px;width:68px;height:24px;background:#fde3a1"><b dir="ltr"><i></i></b></div>
<div class="c n" style="left:502px;top:580px;width:83px;height:24px;background:#fde3a1"><b dir="ltr"><i></i></b></div>
<div class="c n" style="left:402px;top:580px;width:100px;height:24px;background:#fde3a1"><b dir="ltr"><i></i></b></div>
<div class="c n" style="left:349px;top:580px;width:53px;height:24px;background:#efefef"><b dir="ltr">۵۹,۷۲۲</b></div>
<div class="c n" style="left:294px;top:580px;width:55px;height:24px;background:#efefef"><b dir="ltr"><i></i></b></div>
<div class="c n" style="left:213px;top:580px;width:81px;height:24px;background:#fde3a1"><b dir="ltr"><i></i></b></div>
<div class="c n" style="left:114px;top:580px;width:99px;height:24px;background:#efefef"><b dir="ltr"><i></i></b></div>
<div class="c st" style="left:35px;top:580px;width:79px;height:24px;background:#efefef">تولید</div>
<div class="c nm" style="left:1802px;top:604px;width:83px;height:42px;background:#d3e4f6">قطعات ريخته<br>گري</div>
<div class="c u" style="left:1774px;top:604px;width:28px;height:42px;background:#d3e4f6">تن</div>
<div class="c n" style="left:1720px;top:604px;width:54px;height:42px;background:#d3e4f6"><b dir="ltr">۲,۲۹۱</b></div>
<div class="c n" style="left:1656px;top:604px;width:64px;height:42px;background:#d3e4f6"><b dir="ltr"><i></i></b></div>
<div class="c n" style="left:1574px;top:604px;width:82px;height:42px;background:#fde3a1"><b dir="ltr"><i></i></b></div>
<div class="c n" style="left:1474px;top:604px;width:100px;height:42px;background:#d3e4f6"><b dir="ltr"><i></i></b></div>
<div class="c n" style="left:1429px;top:604px;width:45px;height:42px;background:#d3e4f6"><b dir="ltr"><i></i></b></div>
<div class="c n" style="left:1379px;top:604px;width:50px;height:42px;background:#d3e4f6"><b dir="ltr"><i></i></b></div>
<div class="c n" style="left:1294px;top:604px;width:85px;height:42px;background:#d3e4f6"><b dir="ltr"><i></i></b></div>
<div class="c n" style="left:1240px;top:604px;width:54px;height:42px;background:#fde3a1"><b dir="ltr">۲,۲۹۱</b></div>
<div class="c n" style="left:1176px;top:604px;width:64px;height:42px;background:#fde3a1"><b dir="ltr"><i></i></b></div>
<div class="c n" style="left:1093px;top:604px;width:83px;height:42px;background:#fde3a1"><b dir="ltr"><i></i></b></div>
<div class="c n" style="left:993px;top:604px;width:100px;height:42px;background:#fde3a1"><b dir="ltr"><i></i></b></div>
<div class="c n" style="left:944px;top:604px;width:49px;height:42px;background:#d3e4f6"><b dir="ltr">۶۵۳</b></div>
<div class="c n" style="left:881px;top:604px;width:63px;height:42px;background:#d3e4f6"><b dir="ltr"><i></i></b></div>
<div class="c n" style="left:802px;top:604px;width:79px;height:42px;background:#fde3a1"><b dir="ltr"><i></i></b></div>
<div class="c n" style="left:706px;top:604px;width:96px;height:42px;background:#d3e4f6"><b dir="ltr"><i></i></b></div>
<div class="c n" style="left:653px;top:604px;width:53px;height:42px;background:#fde3a1"><b dir="ltr">۲,۹۴۴</b></div>
<div class="c n" style="left:585px;top:604px;width:68px;height:42px;background:#fde3a1"><b dir="ltr"><i></i></b></div>
<div class="c n" style="left:502px;top:604px;width:83px;height:42px;background:#fde3a1"><b dir="ltr"><i></i></b></div>
<div class="c n" style="left:402px;top:604px;width:100px;height:42px;background:#fde3a1"><b dir="ltr"><i></i></b></div>
<div class="c n" style="left:349px;top:604px;width:53px;height:42px;background:#d3e4f6"><b dir="ltr">۲,<i></i>۲۷</b></div>
<div class="c n" style="left:294px;top:604px;width:55px;height:42px;background:#d3e4f6"><b dir="ltr"><i></i></b></div>
<div class="c n" style="left:213px;top:604px;width:81px;height:42px;background:#fde3a1"><b dir="ltr"><i></i></b></div>
<div class="c n" style="left:114px;top:604px;width:99px;height:42px;background:#d3e4f6"><b dir="ltr"><i></i></b></div>
<div class="c st" style="left:35px;top:604px;width:79px;height:42px;background:#d3e4f6">تولید</div>
<div class="c nm" style="left:1802px;top:646px;width:83px;height:24px;background:#efefef">ضایعات</div>
<div class="c u" style="left:1774px;top:646px;width:28px;height:24px;background:#efefef">تن</div>
<div class="c n" style="left:1720px;top:646px;width:54px;height:24px;background:#efefef"><b dir="ltr"><i></i></b></div>
<div class="c n" style="left:1656px;top:646px;width:64px;height:24px;background:#efefef"><b dir="ltr">۴<i></i>۱,۱۲۷</b></div>
<div class="c n" style="left:1574px;top:646px;width:82px;height:24px;background:#fde3a1"><b dir="ltr">۵۲۴,۸۷۶</b></div>
<div class="c n" style="left:1474px;top:646px;width:100px;height:24px;background:#efefef"><b dir="ltr">۲۱<i></i>,۵۴۲</b></div>
<div class="c n" style="left:1429px;top:646px;width:45px;height:24px;background:#efefef"><b dir="ltr"><i></i></b></div>
<div class="c n" style="left:1379px;top:646px;width:50px;height:24px;background:#efefef"><b dir="ltr"><i></i></b></div>
<div class="c n" style="left:1294px;top:646px;width:85px;height:24px;background:#efefef"><b dir="ltr"><i></i></b></div>
<div class="c n" style="left:1240px;top:646px;width:54px;height:24px;background:#fde3a1"><b dir="ltr"><i></i></b></div>
<div class="c n" style="left:1176px;top:646px;width:64px;height:24px;background:#fde3a1"><b dir="ltr">۴<i></i>۱,۱۲۷</b></div>
<div class="c n" style="left:1093px;top:646px;width:83px;height:24px;background:#fde3a1"><b dir="ltr">۵۲۴,۸۷۶</b></div>
<div class="c n" style="left:993px;top:646px;width:100px;height:24px;background:#fde3a1"><b dir="ltr">۲۱<i></i>,۵۴۲</b></div>
<div class="c n" style="left:944px;top:646px;width:49px;height:24px;background:#efefef"><b dir="ltr"><i></i></b></div>
<div class="c n" style="left:881px;top:646px;width:63px;height:24px;background:#efefef"><b dir="ltr">۴<i></i>۷</b></div>
<div class="c n" style="left:802px;top:646px;width:79px;height:24px;background:#fde3a1"><b dir="ltr">۵۹۳,۸۱<i></i>,۸۱۱</b></div>
<div class="c n" style="left:706px;top:646px;width:96px;height:24px;background:#efefef"><b dir="ltr">۲۴۱,۶۸۱</b></div>
<div class="c n" style="left:653px;top:646px;width:53px;height:24px;background:#fde3a1"><b dir="ltr"><i></i></b></div>
<div class="c n" style="left:585px;top:646px;width:68px;height:24px;background:#fde3a1"><b dir="ltr">۴<i></i>۱,۵۳۴</b></div>
<div class="c n" style="left:502px;top:646px;width:83px;height:24px;background:#fde3a1"><b dir="ltr">۱,۱۲۶,۲۳۸</b></div>
<div class="c n" style="left:402px;top:646px;width:100px;height:24px;background:#fde3a1"><b dir="ltr">۴۵۲,۲۲۳</b></div>
<div class="c n" style="left:349px;top:646px;width:53px;height:24px;background:#efefef"><b dir="ltr"><i></i></b></div>
<div class="c n" style="left:294px;top:646px;width:55px;height:24px;background:#efefef"><b dir="ltr"><i></i></b></div>
<div class="c n" style="left:213px;top:646px;width:81px;height:24px;background:#fde3a1"><b dir="ltr"><i></i></b></div>
<div class="c n" style="left:114px;top:646px;width:99px;height:24px;background:#efefef"><b dir="ltr"><i></i></b></div>
<div class="c st" style="left:35px;top:646px;width:79px;height:24px;background:#efefef">تولید</div>
<div class="c nm" style="left:1802px;top:670px;width:83px;height:41px;background:#fde3a1">جمع فروش<br>داخلی</div>
<div class="c u" style="left:1774px;top:670px;width:28px;height:41px;background:#fde3a1"></div>
<div class="c n" style="left:1720px;top:670px;width:54px;height:41px;background:#fde3a1"><b dir="ltr">۱۶<i></i>,۸۳۳</b></div>
<div class="c n" style="left:1656px;top:670px;width:64px;height:41px;background:#fde3a1"><b dir="ltr">۱۸,۱۴۸,۱۴۲</b></div>
<div class="c" style="left:1574px;top:670px;width:82px;height:41px;background:#fde3a1"></div>
<div class="c n" style="left:1474px;top:670px;width:100px;height:41px;background:#fde3a1"><b dir="ltr">۳<i></i>,۶۱۲,۶۷۱</b></div>
<div class="c n" style="left:1429px;top:670px;width:45px;height:41px;background:#fde3a1"><b dir="ltr"><i></i></b></div>
<div class="c n" style="left:1379px;top:670px;width:50px;height:41px;background:#fde3a1"><b dir="ltr"><i></i></b></div>
<div class="c n" style="left:1294px;top:670px;width:85px;height:41px;background:#fde3a1"><b dir="ltr"><i></i></b></div>
<div class="c n" style="left:1240px;top:670px;width:54px;height:41px;background:#fde3a1"><b dir="ltr">۱۶<i></i>,۸۳۳</b></div>
<div class="c n" style="left:1176px;top:670px;width:64px;height:41px;background:#fde3a1"><b dir="ltr">۱۸,۱۴۸,۱۴۲</b></div>
<div class="c" style="left:1093px;top:670px;width:83px;height:41px;background:#fde3a1"></div>
<div class="c n" style="left:993px;top:670px;width:100px;height:41px;background:#fde3a1"><b dir="ltr">۳<i></i>,۶۱۲,۶۷۱</b></div>
<div class="c n" style="left:944px;top:670px;width:49px;height:41px;background:#fde3a1"><b dir="ltr">۲۹,۱۶۶</b></div>
<div class="c n" style="left:881px;top:670px;width:63px;height:41px;background:#fde3a1"><b dir="ltr">۱۳,۶۱۲,۵۱۷</b></div>
<div class="c" style="left:802px;top:670px;width:79px;height:41px;background:#fde3a1"></div>
<div class="c n" style="left:706px;top:670px;width:96px;height:41px;background:#fde3a1"><b dir="ltr">۵,۵۹۸,۱۹۶</b></div>
<div class="c n" style="left:653px;top:670px;width:53px;height:41px;background:#fde3a1"><b dir="ltr">۱۸۹,۹۹۹</b></div>
<div class="c n" style="left:585px;top:670px;width:68px;height:41px;background:#fde3a1"><b dir="ltr">۳۱,۷۶<i></i>,۶۵۹</b></div>
<div class="c" style="left:502px;top:670px;width:83px;height:41px;background:#fde3a1"></div>
<div class="c n" style="left:402px;top:670px;width:100px;height:41px;background:#fde3a1"><b dir="ltr">۳۶,۲۱<i></i>,۸۶۷</b></div>
<div class="c n" style="left:349px;top:670px;width:53px;height:41px;background:#fde3a1"><b dir="ltr">۱۵۳,<i></i><i></i>۴</b></div>
<div class="c n" style="left:294px;top:670px;width:55px;height:41px;background:#fde3a1"><b dir="ltr">۸۲,۵۲<i></i></b></div>
<div class="c" style="left:213px;top:670px;width:81px;height:41px;background:#fde3a1"></div>
<div class="c n" style="left:114px;top:670px;width:99px;height:41px;background:#fde3a1"><b dir="ltr">۲۳,۴۴۳,۱۳۶</b></div>
<div class="c st" style="left:35px;top:670px;width:79px;height:41px;background:#fde3a1"></div>
<div class="c nm b" style="left:1802px;top:711px;width:83px;height:24px;background:#d4d4d4;font-size:10.8px;padding-right:1px">فروش صادراتی:</div>
<div class="c u" style="left:1774px;top:711px;width:28px;height:24px;background:#d4d4d4"></div>
<div class="c" style="left:1720px;top:711px;width:54px;height:24px;background:#d4d4d4"></div>
<div class="c" style="left:1656px;top:711px;width:64px;height:24px;background:#d4d4d4"></div>
<div class="c" style="left:1574px;top:711px;width:82px;height:24px;background:#d4d4d4"></div>
<div class="c" style="left:1474px;top:711px;width:100px;height:24px;background:#d4d4d4"></div>
<div class="c" style="left:1429px;top:711px;width:45px;height:24px;background:#d4d4d4"></div>
<div class="c" style="left:1379px;top:711px;width:50px;height:24px;background:#d4d4d4"></div>
<div class="c" style="left:1294px;top:711px;width:85px;height:24px;background:#d4d4d4"></div>
<div class="c" style="left:1240px;top:711px;width:54px;height:24px;background:#d4d4d4"></div>
<div class="c" style="left:1176px;top:711px;width:64px;height:24px;background:#d4d4d4"></div>
<div class="c" style="left:1093px;top:711px;width:83px;height:24px;background:#d4d4d4"></div>
<div class="c" style="left:993px;top:711px;width:100px;height:24px;background:#d4d4d4"></div>
<div class="c" style="left:944px;top:711px;width:49px;height:24px;background:#d4d4d4"></div>
<div class="c" style="left:881px;top:711px;width:63px;height:24px;background:#d4d4d4"></div>
<div class="c" style="left:802px;top:711px;width:79px;height:24px;background:#d4d4d4"></div>
<div class="c" style="left:706px;top:711px;width:96px;height:24px;background:#d4d4d4"></div>
<div class="c" style="left:653px;top:711px;width:53px;height:24px;background:#d4d4d4"></div>
<div class="c" style="left:585px;top:711px;width:68px;height:24px;background:#d4d4d4"></div>
<div class="c" style="left:502px;top:711px;width:83px;height:24px;background:#d4d4d4"></div>
<div class="c" style="left:402px;top:711px;width:100px;height:24px;background:#d4d4d4"></div>
<div class="c" style="left:349px;top:711px;width:53px;height:24px;background:#d4d4d4"></div>
<div class="c" style="left:294px;top:711px;width:55px;height:24px;background:#d4d4d4"></div>
<div class="c" style="left:213px;top:711px;width:81px;height:24px;background:#d4d4d4"></div>
<div class="c" style="left:114px;top:711px;width:99px;height:24px;background:#d4d4d4"></div>
<div class="c st" style="left:35px;top:711px;width:79px;height:24px;background:#d4d4d4"></div>
<div class="c nm" style="left:1802px;top:735px;width:83px;height:24px;background:#efefef">ورق</div>
<div class="c u" style="left:1774px;top:735px;width:28px;height:24px;background:#efefef">تن</div>
<div class="c n" style="left:1720px;top:735px;width:54px;height:24px;background:#efefef"><b dir="ltr"><i></i></b></div>
<div class="c n" style="left:1656px;top:735px;width:64px;height:24px;background:#efefef"><b dir="ltr">۱<i></i>۱</b></div>
<div class="c n" style="left:1574px;top:735px;width:82px;height:24px;background:#fde3a1"><b dir="ltr">۳۳۲,۹۶<i></i>,۳۹۶</b></div>
<div class="c n" style="left:1474px;top:735px;width:100px;height:24px;background:#efefef"><b dir="ltr">۳۳,۶۲۹</b></div>
<div class="c n" style="left:1429px;top:735px;width:45px;height:24px;background:#efefef"><b dir="ltr"><i></i></b></div>
<div class="c n" style="left:1379px;top:735px;width:50px;height:24px;background:#efefef"><b dir="ltr"><i></i></b></div>
<div class="c n" style="left:1294px;top:735px;width:85px;height:24px;background:#efefef"><b dir="ltr"><i></i></b></div>
<div class="c n" style="left:1240px;top:735px;width:54px;height:24px;background:#fde3a1"><b dir="ltr"><i></i></b></div>
<div class="c n" style="left:1176px;top:735px;width:64px;height:24px;background:#fde3a1"><b dir="ltr">۱<i></i>۱</b></div>
<div class="c n" style="left:1093px;top:735px;width:83px;height:24px;background:#fde3a1"><b dir="ltr">۳۳۲,۹۶<i></i>,۳۹۶</b></div>
<div class="c n" style="left:993px;top:735px;width:100px;height:24px;background:#fde3a1"><b dir="ltr">۳۳,۶۲۹</b></div>
<div class="c n" style="left:944px;top:735px;width:49px;height:24px;background:#efefef"><b dir="ltr"><i></i></b></div>
<div class="c n" style="left:881px;top:735px;width:63px;height:24px;background:#efefef"><b dir="ltr"><i></i></b></div>
<div class="c n" style="left:802px;top:735px;width:79px;height:24px;background:#fde3a1"><b dir="ltr"><i></i></b></div>
<div class="c n" style="left:706px;top:735px;width:96px;height:24px;background:#efefef"><b dir="ltr"><i></i></b></div>
<div class="c n" style="left:653px;top:735px;width:53px;height:24px;background:#fde3a1"><b dir="ltr"><i></i></b></div>
<div class="c n" style="left:585px;top:735px;width:68px;height:24px;background:#fde3a1"><b dir="ltr">۱<i></i>۱</b></div>
<div class="c n" style="left:502px;top:735px;width:83px;height:24px;background:#fde3a1"><b dir="ltr">۳۳۲,۹۶<i></i>,۳۹۶</b></div>
<div class="c n" style="left:402px;top:735px;width:100px;height:24px;background:#fde3a1"><b dir="ltr">۳۳,۶۲۹</b></div>
<div class="c n" style="left:349px;top:735px;width:53px;height:24px;background:#efefef"><b dir="ltr"><i></i></b></div>
<div class="c n" style="left:294px;top:735px;width:55px;height:24px;background:#efefef"><b dir="ltr"><i></i></b></div>
<div class="c n" style="left:213px;top:735px;width:81px;height:24px;background:#fde3a1"><b dir="ltr"><i></i></b></div>
<div class="c n" style="left:114px;top:735px;width:99px;height:24px;background:#efefef"><b dir="ltr"><i></i></b></div>
<div class="c st" style="left:35px;top:735px;width:79px;height:24px;background:#efefef">تولید</div>
<div class="c nm" style="left:1802px;top:759px;width:83px;height:41px;background:#fde3a1">جمع فروش<br>صادراتی</div>
<div class="c u" style="left:1774px;top:759px;width:28px;height:41px;background:#fde3a1"></div>
<div class="c n" style="left:1720px;top:759px;width:54px;height:41px;background:#fde3a1"><b dir="ltr"><i></i></b></div>
<div class="c n" style="left:1656px;top:759px;width:64px;height:41px;background:#fde3a1"><b dir="ltr">۱<i></i>۱</b></div>
<div class="c" style="left:1574px;top:759px;width:82px;height:41px;background:#fde3a1"></div>
<div class="c n" style="left:1474px;top:759px;width:100px;height:41px;background:#fde3a1"><b dir="ltr">۳۳,۶۲۹</b></div>
<div class="c n" style="left:1429px;top:759px;width:45px;height:41px;background:#fde3a1"><b dir="ltr"><i></i></b></div>
<div class="c n" style="left:1379px;top:759px;width:50px;height:41px;background:#fde3a1"><b dir="ltr"><i></i></b></div>
<div class="c n" style="left:1294px;top:759px;width:85px;height:41px;background:#fde3a1"><b dir="ltr"><i></i></b></div>
<div class="c n" style="left:1240px;top:759px;width:54px;height:41px;background:#fde3a1"><b dir="ltr"><i></i></b></div>
<div class="c n" style="left:1176px;top:759px;width:64px;height:41px;background:#fde3a1"><b dir="ltr">۱<i></i>۱</b></div>
<div class="c" style="left:1093px;top:759px;width:83px;height:41px;background:#fde3a1"></div>
<div class="c n" style="left:993px;top:759px;width:100px;height:41px;background:#fde3a1"><b dir="ltr">۳۳,۶۲۹</b></div>
<div class="c n" style="left:944px;top:759px;width:49px;height:41px;background:#fde3a1"><b dir="ltr"><i></i></b></div>
<div class="c n" style="left:881px;top:759px;width:63px;height:41px;background:#fde3a1"><b dir="ltr"><i></i></b></div>
<div class="c" style="left:802px;top:759px;width:79px;height:41px;background:#fde3a1"></div>
<div class="c n" style="left:706px;top:759px;width:96px;height:41px;background:#fde3a1"><b dir="ltr"><i></i></b></div>
<div class="c n" style="left:653px;top:759px;width:53px;height:41px;background:#fde3a1"><b dir="ltr"><i></i></b></div>
<div class="c n" style="left:585px;top:759px;width:68px;height:41px;background:#fde3a1"><b dir="ltr">۱<i></i>۱</b></div>
<div class="c" style="left:502px;top:759px;width:83px;height:41px;background:#fde3a1"></div>
<div class="c n" style="left:402px;top:759px;width:100px;height:41px;background:#fde3a1"><b dir="ltr">۳۳,۶۲۹</b></div>
<div class="c n" style="left:349px;top:759px;width:53px;height:41px;background:#fde3a1"><b dir="ltr"><i></i></b></div>
<div class="c n" style="left:294px;top:759px;width:55px;height:41px;background:#fde3a1"><b dir="ltr"><i></i></b></div>
<div class="c" style="left:213px;top:759px;width:81px;height:41px;background:#fde3a1"></div>
<div class="c n" style="left:114px;top:759px;width:99px;height:41px;background:#fde3a1"><b dir="ltr"><i></i></b></div>
<div class="c st" style="left:35px;top:759px;width:79px;height:41px;background:#fde3a1"></div>
<div class="c nm b" style="left:1802px;top:800px;width:83px;height:42px;background:#d4d4d4">درآمد ارائه<br>خدمات:</div>
<div class="c u" style="left:1774px;top:800px;width:28px;height:42px;background:#d4d4d4"></div>
<div class="c" style="left:1720px;top:800px;width:54px;height:42px;background:#d4d4d4"></div>
<div class="c" style="left:1656px;top:800px;width:64px;height:42px;background:#d4d4d4"></div>
<div class="c" style="left:1574px;top:800px;width:82px;height:42px;background:#d4d4d4"></div>
<div class="c" style="left:1474px;top:800px;width:100px;height:42px;background:#d4d4d4"></div>
<div class="c" style="left:1429px;top:800px;width:45px;height:42px;background:#d4d4d4"></div>
<div class="c" style="left:1379px;top:800px;width:50px;height:42px;background:#d4d4d4"></div>
<div class="c" style="left:1294px;top:800px;width:85px;height:42px;background:#d4d4d4"></div>
<div class="c" style="left:1240px;top:800px;width:54px;height:42px;background:#d4d4d4"></div>
<div class="c" style="left:1176px;top:800px;width:64px;height:42px;background:#d4d4d4"></div>
<div class="c" style="left:1093px;top:800px;width:83px;height:42px;background:#d4d4d4"></div>
<div class="c" style="left:993px;top:800px;width:100px;height:42px;background:#d4d4d4"></div>
<div class="c" style="left:944px;top:800px;width:49px;height:42px;background:#d4d4d4"></div>
<div class="c" style="left:881px;top:800px;width:63px;height:42px;background:#d4d4d4"></div>
<div class="c" style="left:802px;top:800px;width:79px;height:42px;background:#d4d4d4"></div>
<div class="c" style="left:706px;top:800px;width:96px;height:42px;background:#d4d4d4"></div>
<div class="c" style="left:653px;top:800px;width:53px;height:42px;background:#d4d4d4"></div>
<div class="c" style="left:585px;top:800px;width:68px;height:42px;background:#d4d4d4"></div>
<div class="c" style="left:502px;top:800px;width:83px;height:42px;background:#d4d4d4"></div>
<div class="c" style="left:402px;top:800px;width:100px;height:42px;background:#d4d4d4"></div>
<div class="c" style="left:349px;top:800px;width:53px;height:42px;background:#d4d4d4"></div>
<div class="c" style="left:294px;top:800px;width:55px;height:42px;background:#d4d4d4"></div>
<div class="c" style="left:213px;top:800px;width:81px;height:42px;background:#d4d4d4"></div>
<div class="c" style="left:114px;top:800px;width:99px;height:42px;background:#d4d4d4"></div>
<div class="c st" style="left:35px;top:800px;width:79px;height:42px;background:#d4d4d4"></div>
<div class="c nm" style="left:1802px;top:842px;width:83px;height:41px;background:#fde3a1">جمع درآمد ارائه<br>خدمات</div>
<div class="c u" style="left:1774px;top:842px;width:28px;height:41px;background:#fde3a1"></div>
<div class="c n" style="left:1720px;top:842px;width:54px;height:41px;background:#fde3a1"><b dir="ltr"><i></i></b></div>
<div class="c n" style="left:1656px;top:842px;width:64px;height:41px;background:#fde3a1"><b dir="ltr"><i></i></b></div>
<div class="c" style="left:1574px;top:842px;width:82px;height:41px;background:#fde3a1"></div>
<div class="c n" style="left:1474px;top:842px;width:100px;height:41px;background:#fde3a1"><b dir="ltr"><i></i></b></div>
<div class="c n" style="left:1429px;top:842px;width:45px;height:41px;background:#fde3a1"><b dir="ltr"><i></i></b></div>
<div class="c n" style="left:1379px;top:842px;width:50px;height:41px;background:#fde3a1"><b dir="ltr"><i></i></b></div>
<div class="c n" style="left:1294px;top:842px;width:85px;height:41px;background:#fde3a1"><b dir="ltr"><i></i></b></div>
<div class="c n" style="left:1240px;top:842px;width:54px;height:41px;background:#fde3a1"><b dir="ltr"><i></i></b></div>
<div class="c n" style="left:1176px;top:842px;width:64px;height:41px;background:#fde3a1"><b dir="ltr"><i></i></b></div>
<div class="c" style="left:1093px;top:842px;width:83px;height:41px;background:#fde3a1"></div>
<div class="c n" style="left:993px;top:842px;width:100px;height:41px;background:#fde3a1"><b dir="ltr"><i></i></b></div>
<div class="c n" style="left:944px;top:842px;width:49px;height:41px;background:#fde3a1"><b dir="ltr"><i></i></b></div>
<div class="c n" style="left:881px;top:842px;width:63px;height:41px;background:#fde3a1"><b dir="ltr"><i></i></b></div>
<div class="c" style="left:802px;top:842px;width:79px;height:41px;background:#fde3a1"></div>
<div class="c n" style="left:706px;top:842px;width:96px;height:41px;background:#fde3a1"><b dir="ltr"><i></i></b></div>
<div class="c n" style="left:653px;top:842px;width:53px;height:41px;background:#fde3a1"><b dir="ltr"><i></i></b></div>
<div class="c n" style="left:585px;top:842px;width:68px;height:41px;background:#fde3a1"><b dir="ltr"><i></i></b></div>
<div class="c" style="left:502px;top:842px;width:83px;height:41px;background:#fde3a1"></div>
<div class="c n" style="left:402px;top:842px;width:100px;height:41px;background:#fde3a1"><b dir="ltr"><i></i></b></div>
<div class="c n" style="left:349px;top:842px;width:53px;height:41px;background:#fde3a1"><b dir="ltr"><i></i></b></div>
<div class="c n" style="left:294px;top:842px;width:55px;height:41px;background:#fde3a1"><b dir="ltr"><i></i></b></div>
<div class="c" style="left:213px;top:842px;width:81px;height:41px;background:#fde3a1"></div>
<div class="c n" style="left:114px;top:842px;width:99px;height:41px;background:#fde3a1"><b dir="ltr"><i></i></b></div>
<div class="c st" style="left:35px;top:842px;width:79px;height:41px;background:#fde3a1"></div>
<div class="c nm b" style="left:1802px;top:883px;width:83px;height:41px;background:#d4d4d4">برگشت از<br>فروش:</div>
<div class="c u" style="left:1774px;top:883px;width:28px;height:41px;background:#d4d4d4"></div>
<div class="c" style="left:1720px;top:883px;width:54px;height:41px;background:#d4d4d4"></div>
<div class="c" style="left:1656px;top:883px;width:64px;height:41px;background:#d4d4d4"></div>
<div class="c" style="left:1574px;top:883px;width:82px;height:41px;background:#d4d4d4"></div>
<div class="c" style="left:1474px;top:883px;width:100px;height:41px;background:#d4d4d4"></div>
<div class="c" style="left:1429px;top:883px;width:45px;height:41px;background:#d4d4d4"></div>
<div class="c" style="left:1379px;top:883px;width:50px;height:41px;background:#d4d4d4"></div>
<div class="c" style="left:1294px;top:883px;width:85px;height:41px;background:#d4d4d4"></div>
<div class="c" style="left:1240px;top:883px;width:54px;height:41px;background:#d4d4d4"></div>
<div class="c" style="left:1176px;top:883px;width:64px;height:41px;background:#d4d4d4"></div>
<div class="c" style="left:1093px;top:883px;width:83px;height:41px;background:#d4d4d4"></div>
<div class="c" style="left:993px;top:883px;width:100px;height:41px;background:#d4d4d4"></div>
<div class="c" style="left:944px;top:883px;width:49px;height:41px;background:#d4d4d4"></div>
<div class="c" style="left:881px;top:883px;width:63px;height:41px;background:#d4d4d4"></div>
<div class="c" style="left:802px;top:883px;width:79px;height:41px;background:#d4d4d4"></div>
<div class="c" style="left:706px;top:883px;width:96px;height:41px;background:#d4d4d4"></div>
<div class="c" style="left:653px;top:883px;width:53px;height:41px;background:#d4d4d4"></div>
<div class="c" style="left:585px;top:883px;width:68px;height:41px;background:#d4d4d4"></div>
<div class="c" style="left:502px;top:883px;width:83px;height:41px;background:#d4d4d4"></div>
<div class="c" style="left:402px;top:883px;width:100px;height:41px;background:#d4d4d4"></div>
<div class="c" style="left:349px;top:883px;width:53px;height:41px;background:#d4d4d4"></div>
<div class="c" style="left:294px;top:883px;width:55px;height:41px;background:#d4d4d4"></div>
<div class="c" style="left:213px;top:883px;width:81px;height:41px;background:#d4d4d4"></div>
<div class="c" style="left:114px;top:883px;width:99px;height:41px;background:#d4d4d4"></div>
<div class="c st" style="left:35px;top:883px;width:79px;height:41px;background:#d4d4d4"></div>
<div class="c nm" style="left:1802px;top:924px;width:83px;height:24px;background:#d3e4f6">ورق</div>
<div class="c u" style="left:1774px;top:924px;width:28px;height:24px;background:#d3e4f6">تن</div>
<div class="c" style="left:1720px;top:924px;width:54px;height:24px;background:#d3e4f6"></div>
<div class="c n red" style="left:1656px;top:924px;width:64px;height:24px;background:#d3e4f6"><b dir="ltr">(۳۹)</b></div>
<div class="c n" style="left:1574px;top:924px;width:82px;height:24px;background:#fde3a1"><b dir="ltr">۴<i></i>۹,<i></i>۲۵,۶۴۱</b></div>
<div class="c n red" style="left:1474px;top:924px;width:100px;height:24px;background:#d3e4f6"><b dir="ltr">(۱۵,۹۵۲)</b></div>
<div class="c" style="left:1429px;top:924px;width:45px;height:24px;background:#d3e4f6"></div>
<div class="c n" style="left:1379px;top:924px;width:50px;height:24px;background:#d3e4f6"><b dir="ltr"><i></i></b></div>
<div class="c n" style="left:1294px;top:924px;width:85px;height:24px;background:#d3e4f6"><b dir="ltr"><i></i></b></div>
<div class="c" style="left:1240px;top:924px;width:54px;height:24px;background:#d3e4f6"></div>
<div class="c n red" style="left:1176px;top:924px;width:64px;height:24px;background:#fde3a1"><b dir="ltr">(۳۹)</b></div>
<div class="c n" style="left:1093px;top:924px;width:83px;height:24px;background:#fde3a1"><b dir="ltr">۴<i></i>۹,<i></i>۲۵,۶۴۱</b></div>
<div class="c n red" style="left:993px;top:924px;width:100px;height:24px;background:#fde3a1"><b dir="ltr">(۱۵,۹۵۲)</b></div>
<div class="c" style="left:944px;top:924px;width:49px;height:24px;background:#d3e4f6"></div>
<div class="c n" style="left:881px;top:924px;width:63px;height:24px;background:#d3e4f6"><b dir="ltr"><i></i></b></div>
<div class="c n" style="left:802px;top:924px;width:79px;height:24px;background:#fde3a1"><b dir="ltr"><i></i></b></div>
<div class="c n" style="left:706px;top:924px;width:96px;height:24px;background:#d3e4f6"><b dir="ltr"><i></i></b></div>
<div class="c" style="left:653px;top:924px;width:53px;height:24px;background:#fde3a1"></div>
<div class="c n red" style="left:585px;top:924px;width:68px;height:24px;background:#fde3a1"><b dir="ltr">(۳۹)</b></div>
<div class="c n" style="left:502px;top:924px;width:83px;height:24px;background:#fde3a1"><b dir="ltr">۴<i></i>۹,<i></i>۲۵,۶۴۱</b></div>
<div class="c n red" style="left:402px;top:924px;width:100px;height:24px;background:#fde3a1"><b dir="ltr">(۱۵,۹۵۲)</b></div>
<div class="c" style="left:349px;top:924px;width:53px;height:24px;background:#d3e4f6"></div>
<div class="c n" style="left:294px;top:924px;width:55px;height:24px;background:#d3e4f6"><b dir="ltr"><i></i></b></div>
<div class="c n" style="left:213px;top:924px;width:81px;height:24px;background:#fde3a1"><b dir="ltr"><i></i></b></div>
<div class="c n" style="left:114px;top:924px;width:99px;height:24px;background:#d3e4f6"><b dir="ltr"><i></i></b></div>
<div class="c st" style="left:35px;top:924px;width:79px;height:24px;background:#d3e4f6">تولید</div>
<div class="c nm" style="left:1802px;top:948px;width:83px;height:42px;background:#fde3a1">جمع برگشت از<br>فروش</div>
<div class="c u" style="left:1774px;top:948px;width:28px;height:42px;background:#fde3a1"></div>
<div class="c" style="left:1720px;top:948px;width:54px;height:42px;background:#fde3a1"></div>
<div class="c n red" style="left:1656px;top:948px;width:64px;height:42px;background:#fde3a1"><b dir="ltr">(۳۹)</b></div>
<div class="c" style="left:1574px;top:948px;width:82px;height:42px;background:#fde3a1"></div>
<div class="c n red" style="left:1474px;top:948px;width:100px;height:42px;background:#fde3a1"><b dir="ltr">(۱۵,۹۵۲)</b></div>
<div class="c" style="left:1429px;top:948px;width:45px;height:42px;background:#fde3a1"></div>
<div class="c n" style="left:1379px;top:948px;width:50px;height:42px;background:#fde3a1"><b dir="ltr"><i></i></b></div>
<div class="c n" style="left:1294px;top:948px;width:85px;height:42px;background:#fde3a1"><b dir="ltr"><i></i></b></div>
<div class="c" style="left:1240px;top:948px;width:54px;height:42px;background:#fde3a1"></div>
<div class="c n red" style="left:1176px;top:948px;width:64px;height:42px;background:#fde3a1"><b dir="ltr">(۳۹)</b></div>
<div class="c" style="left:1093px;top:948px;width:83px;height:42px;background:#fde3a1"></div>
<div class="c n red" style="left:993px;top:948px;width:100px;height:42px;background:#fde3a1"><b dir="ltr">(۱۵,۹۵۲)</b></div>
<div class="c" style="left:944px;top:948px;width:49px;height:42px;background:#fde3a1"></div>
<div class="c n" style="left:881px;top:948px;width:63px;height:42px;background:#fde3a1"><b dir="ltr"><i></i></b></div>
<div class="c" style="left:802px;top:948px;width:79px;height:42px;background:#fde3a1"></div>
<div class="c n" style="left:706px;top:948px;width:96px;height:42px;background:#fde3a1"><b dir="ltr"><i></i></b></div>
<div class="c" style="left:653px;top:948px;width:53px;height:42px;background:#fde3a1"></div>
<div class="c n red" style="left:585px;top:948px;width:68px;height:42px;background:#fde3a1"><b dir="ltr">(۳۹)</b></div>
<div class="c" style="left:502px;top:948px;width:83px;height:42px;background:#fde3a1"></div>
<div class="c n red" style="left:402px;top:948px;width:100px;height:42px;background:#fde3a1"><b dir="ltr">(۱۵,۹۵۲)</b></div>
<div class="c" style="left:349px;top:948px;width:53px;height:42px;background:#fde3a1"></div>
<div class="c n" style="left:294px;top:948px;width:55px;height:42px;background:#fde3a1"><b dir="ltr"><i></i></b></div>
<div class="c" style="left:213px;top:948px;width:81px;height:42px;background:#fde3a1"></div>
<div class="c n" style="left:114px;top:948px;width:99px;height:42px;background:#fde3a1"><b dir="ltr"><i></i></b></div>
<div class="c st" style="left:35px;top:948px;width:79px;height:42px;background:#fde3a1"></div>
<div class="c nm" style="left:1802px;top:990px;width:83px;height:24px;background:#efefef">تخفیفات</div>
<div class="c u" style="left:1774px;top:990px;width:28px;height:24px;background:#efefef"></div>
<div class="c" style="left:1720px;top:990px;width:54px;height:24px;background:#d4d4d4"></div>
<div class="c" style="left:1656px;top:990px;width:64px;height:24px;background:#d4d4d4"></div>
<div class="c" style="left:1574px;top:990px;width:82px;height:24px;background:#d4d4d4"></div>
<div class="c n" style="left:1474px;top:990px;width:100px;height:24px;background:#efefef"><b dir="ltr"><i></i></b></div>
<div class="c" style="left:1429px;top:990px;width:45px;height:24px;background:#d4d4d4"></div>
<div class="c" style="left:1379px;top:990px;width:50px;height:24px;background:#d4d4d4"></div>
<div class="c n" style="left:1294px;top:990px;width:85px;height:24px;background:#efefef"><b dir="ltr"><i></i></b></div>
<div class="c" style="left:1240px;top:990px;width:54px;height:24px;background:#d4d4d4"></div>
<div class="c" style="left:1176px;top:990px;width:64px;height:24px;background:#d4d4d4"></div>
<div class="c" style="left:1093px;top:990px;width:83px;height:24px;background:#d4d4d4"></div>
<div class="c n" style="left:993px;top:990px;width:100px;height:24px;background:#efefef"><b dir="ltr"><i></i></b></div>
<div class="c" style="left:944px;top:990px;width:49px;height:24px;background:#d4d4d4"></div>
<div class="c" style="left:881px;top:990px;width:63px;height:24px;background:#d4d4d4"></div>
<div class="c" style="left:802px;top:990px;width:79px;height:24px;background:#d4d4d4"></div>
<div class="c n" style="left:706px;top:990px;width:96px;height:24px;background:#efefef"><b dir="ltr"><i></i></b></div>
<div class="c" style="left:653px;top:990px;width:53px;height:24px;background:#d4d4d4"></div>
<div class="c" style="left:585px;top:990px;width:68px;height:24px;background:#d4d4d4"></div>
<div class="c" style="left:502px;top:990px;width:83px;height:24px;background:#d4d4d4"></div>
<div class="c n" style="left:402px;top:990px;width:100px;height:24px;background:#efefef"><b dir="ltr"><i></i></b></div>
<div class="c" style="left:349px;top:990px;width:53px;height:24px;background:#d4d4d4"></div>
<div class="c" style="left:294px;top:990px;width:55px;height:24px;background:#d4d4d4"></div>
<div class="c" style="left:213px;top:990px;width:81px;height:24px;background:#d4d4d4"></div>
<div class="c n" style="left:114px;top:990px;width:99px;height:24px;background:#efefef"><b dir="ltr"><i></i></b></div>
<div class="c st" style="left:35px;top:990px;width:79px;height:24px;background:#efefef"></div>
<div class="c nm" style="left:1802px;top:1014px;width:83px;height:24px;background:#fde3a1">جمع</div>
<div class="c u" style="left:1774px;top:1014px;width:28px;height:24px;background:#fde3a1"></div>
<div class="c" style="left:1720px;top:1014px;width:54px;height:24px;background:#fde3a1"></div>
<div class="c" style="left:1656px;top:1014px;width:64px;height:24px;background:#fde3a1"></div>
<div class="c" style="left:1574px;top:1014px;width:82px;height:24px;background:#fde3a1"></div>
<div class="c n" style="left:1474px;top:1014px;width:100px;height:24px;background:#fde3a1"><b dir="ltr">۳<i></i>,۶۳<i></i>,۳۴۸</b></div>
<div class="c" style="left:1429px;top:1014px;width:45px;height:24px;background:#fde3a1"></div>
<div class="c" style="left:1379px;top:1014px;width:50px;height:24px;background:#fde3a1"></div>
<div class="c n" style="left:1294px;top:1014px;width:85px;height:24px;background:#fde3a1"><b dir="ltr"><i></i></b></div>
<div class="c" style="left:1240px;top:1014px;width:54px;height:24px;background:#fde3a1"></div>
<div class="c" style="left:1176px;top:1014px;width:64px;height:24px;background:#fde3a1"></div>
<div class="c" style="left:1093px;top:1014px;width:83px;height:24px;background:#fde3a1"></div>
<div class="c n" style="left:993px;top:1014px;width:100px;height:24px;background:#fde3a1"><b dir="ltr">۳<i></i>,۶۳<i></i>,۳۴۸</b></div>
<div class="c" style="left:944px;top:1014px;width:49px;height:24px;background:#fde3a1"></div>
<div class="c" style="left:881px;top:1014px;width:63px;height:24px;background:#fde3a1"></div>
<div class="c" style="left:802px;top:1014px;width:79px;height:24px;background:#fde3a1"></div>
<div class="c n" style="left:706px;top:1014px;width:96px;height:24px;background:#fde3a1"><b dir="ltr">۵,۵۹۸,۱۹۶</b></div>
<div class="c" style="left:653px;top:1014px;width:53px;height:24px;background:#fde3a1"></div>
<div class="c" style="left:585px;top:1014px;width:68px;height:24px;background:#fde3a1"></div>
<div class="c" style="left:502px;top:1014px;width:83px;height:24px;background:#fde3a1"></div>
<div class="c n" style="left:402px;top:1014px;width:100px;height:24px;background:#fde3a1"><b dir="ltr">۳۶,۲۲۸,۵۴۴</b></div>
<div class="c" style="left:349px;top:1014px;width:53px;height:24px;background:#fde3a1"></div>
<div class="c" style="left:294px;top:1014px;width:55px;height:24px;background:#fde3a1"></div>
<div class="c" style="left:213px;top:1014px;width:81px;height:24px;background:#fde3a1"></div>
<div class="c n" style="left:114px;top:1014px;width:99px;height:24px;background:#fde3a1"><b dir="ltr">۲۳,۴۴۳,۱۳۶</b></div>
<div class="c st" style="left:35px;top:1014px;width:79px;height:24px;background:#fde3a1"></div>

<div class="abs" style="left:35px;top:1038px;width:1850px;height:1px;background:#b9bdc4"></div>
<div class="abs" style="left:1884px;top:435px;width:1px;height:604px;background:#b9bdc4"></div>
<div class="bar" style="top:1049px;height:26px"><span>خرید مواد اولیه</span></div>
<div id="wm">@Codal360.ir</div>
</body>
</html>
